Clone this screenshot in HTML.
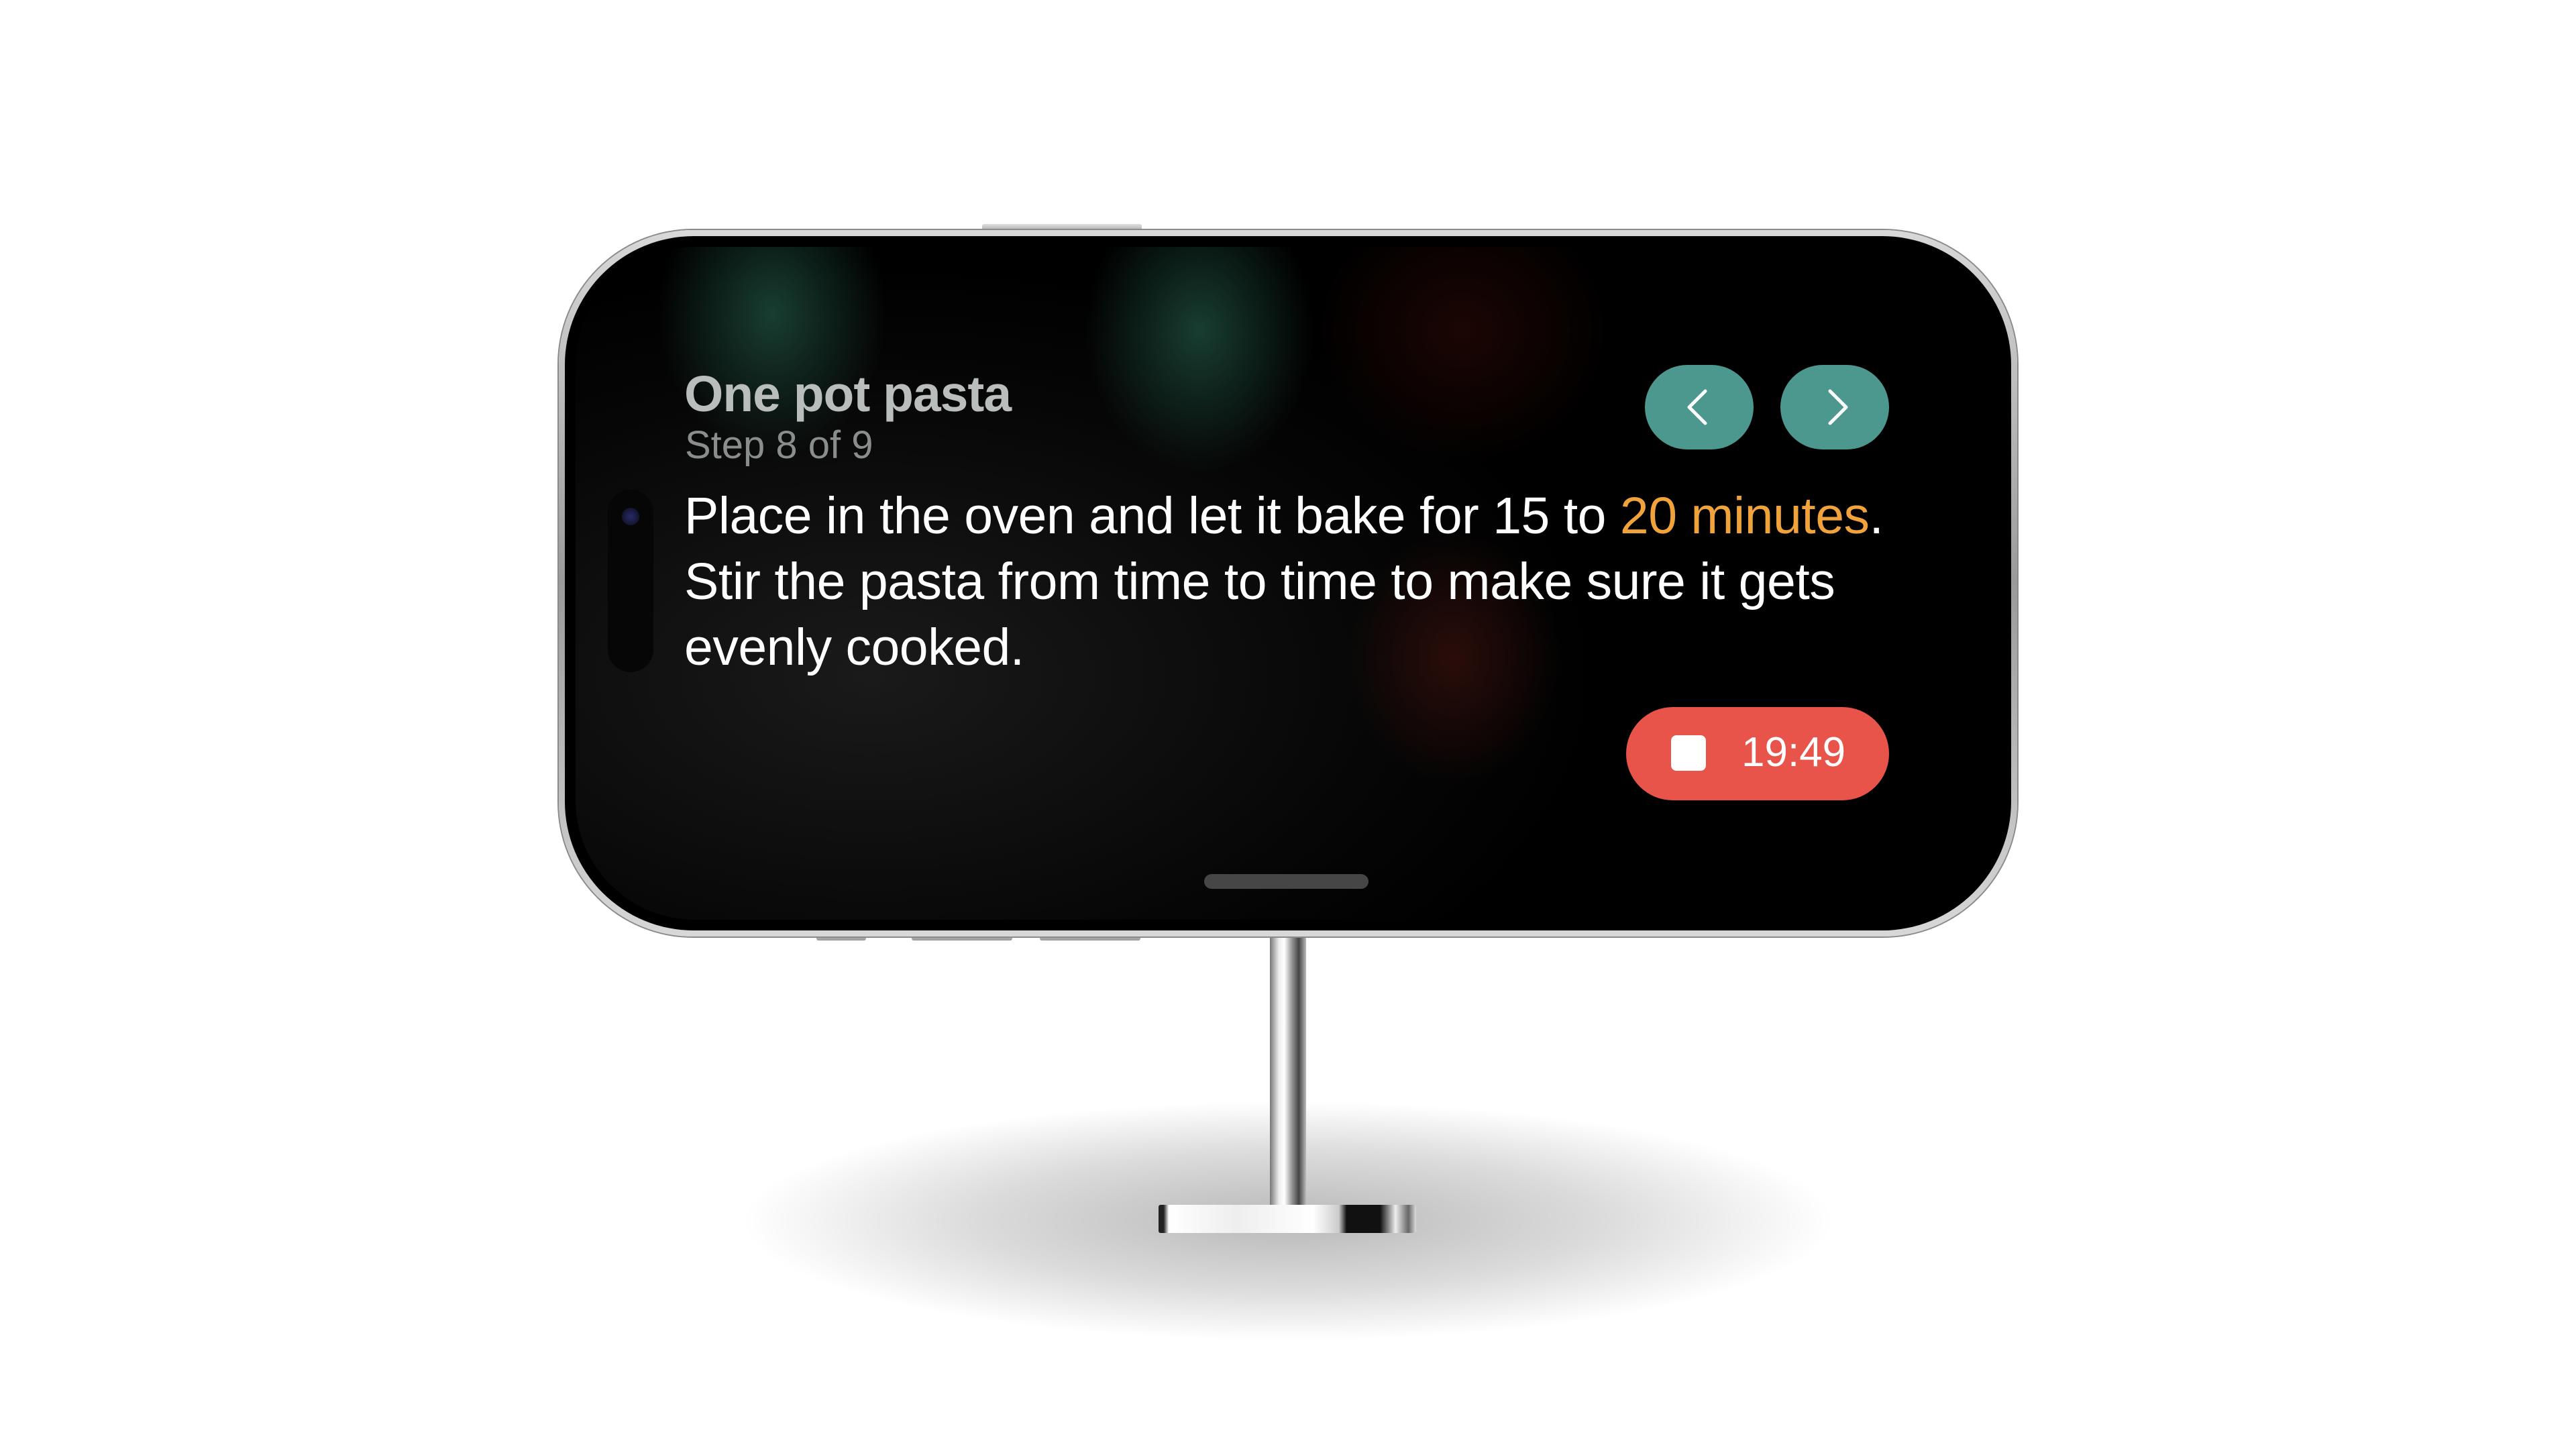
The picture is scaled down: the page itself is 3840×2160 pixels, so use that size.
<!DOCTYPE html>
<html><head><meta charset="utf-8"><style>
html,body{margin:0;padding:0;background:#fff;width:3840px;height:2160px;overflow:hidden;position:relative;font-family:"Liberation Sans",sans-serif}
.abs{position:absolute}
.shadow{left:1100px;top:1640px;width:1640px;height:360px;border-radius:50%;background:radial-gradient(ellipse at center,rgba(0,0,0,.28) 0%,rgba(0,0,0,.14) 40%,rgba(0,0,0,0) 70%)}
.pole{left:1893px;top:1390px;width:54px;height:412px;background:linear-gradient(90deg,#777 0%,#eee 25%,#fff 40%,#999 60%,#444 80%,#bbb 100%)}
.base{left:1727px;top:1796px;width:384px;height:42px;background:linear-gradient(90deg,#222 0%,#222 2%,#fff 4%,#eee 30%,#fff 60%,#ccc 70%,#111 73%,#111 86%,#eee 92%,#666 97%,#ddd 100%);border-radius:3px}
.btn{background:linear-gradient(#ddd,#999);border-radius:3px}
.phone{left:833px;top:343px;width:2174px;height:1053px;border-radius:200px;background:linear-gradient(#d8d8d8,#9a9a9a 50%,#d8d8d8);box-shadow:0 0 0 2px #8a8a8a}
.bezel{left:842px;top:352px;width:2156px;height:1035px;border-radius:192px;background:#000}
.screen{left:858px;top:368px;width:2124px;height:1003px;border-radius:178px;overflow:hidden;
background:
radial-gradient(ellipse 170px 210px at 293px 100px,rgba(28,72,58,.85),rgba(0,0,0,0)),
radial-gradient(ellipse 170px 210px at 930px 125px,rgba(28,72,58,.85),rgba(0,0,0,0)),
radial-gradient(ellipse 220px 200px at 1322px 125px,rgba(45,10,6,.6),rgba(0,0,0,0)),
radial-gradient(ellipse 160px 190px at 1309px 612px,rgba(55,16,12,.75),rgba(0,0,0,0)),
radial-gradient(ellipse 1100px 620px at 440px 640px,#1a1a1a,#060606 70%,#000);}
.t{white-space:nowrap;position:absolute}
</style></head><body>
<div class="abs shadow"></div>
<div class="abs pole"></div>
<div class="abs base"></div>
<div class="abs btn" style="left:1464px;top:334px;width:238px;height:14px"></div>
<div class="abs btn" style="left:1217px;top:1388px;width:74px;height:14px"></div>
<div class="abs btn" style="left:1359px;top:1388px;width:150px;height:14px"></div>
<div class="abs btn" style="left:1550px;top:1388px;width:150px;height:14px"></div>
<div class="abs phone"></div>
<div class="abs bezel"></div>
<div class="abs screen"></div>
<div class="abs" style="left:906px;top:730px;width:68px;height:272px;border-radius:34px;background:#060606"></div>
<div class="abs" style="left:927px;top:757px;width:26px;height:26px;border-radius:50%;background:radial-gradient(#2a2a66,#0a0a1a)"></div>

<div class="t" style="left:1020px;top:544px;font-size:75px;font-weight:bold;color:#b9bebd;letter-spacing:-1px">One pot pasta</div>
<div class="t" style="left:1021px;top:630px;font-size:58px;color:#8a8d8e">Step 8 of 9</div>
<div class="t" style="left:1020px;top:720px;font-size:77px;line-height:98px;color:#fff;letter-spacing:-0.5px">Place in the oven and let it bake for 15 to <span style="color:#f0a33a">20 minutes</span>.<br>Stir the pasta from time to time to make sure it gets<br>evenly cooked.</div>

<div class="abs" style="left:2452px;top:544px;width:162px;height:126px;border-radius:63px;background:#4c988e"></div>
<div class="abs" style="left:2654px;top:544px;width:162px;height:126px;border-radius:63px;background:#4c988e"></div>
<svg class="abs" style="left:2452px;top:544px" width="364" height="126"><path d="M90 39 L66 63 L90 87" fill="none" stroke="#fff" stroke-width="5" stroke-linecap="round" stroke-linejoin="round"/><path d="M276 39 L300 63 L276 87" fill="none" stroke="#fff" stroke-width="5" stroke-linecap="round" stroke-linejoin="round"/></svg>

<div class="abs" style="left:2424px;top:1054px;width:392px;height:139px;border-radius:70px;background:#e9544a"></div>
<div class="abs" style="left:2491px;top:1096px;width:52px;height:53px;border-radius:8px;background:#fff"></div>
<div class="t" style="left:2596px;top:1086px;font-size:62px;color:#fff">19:49</div>

<div class="abs" style="left:1795px;top:1303px;width:245px;height:22px;border-radius:11px;background:#464646"></div>
</body></html>
